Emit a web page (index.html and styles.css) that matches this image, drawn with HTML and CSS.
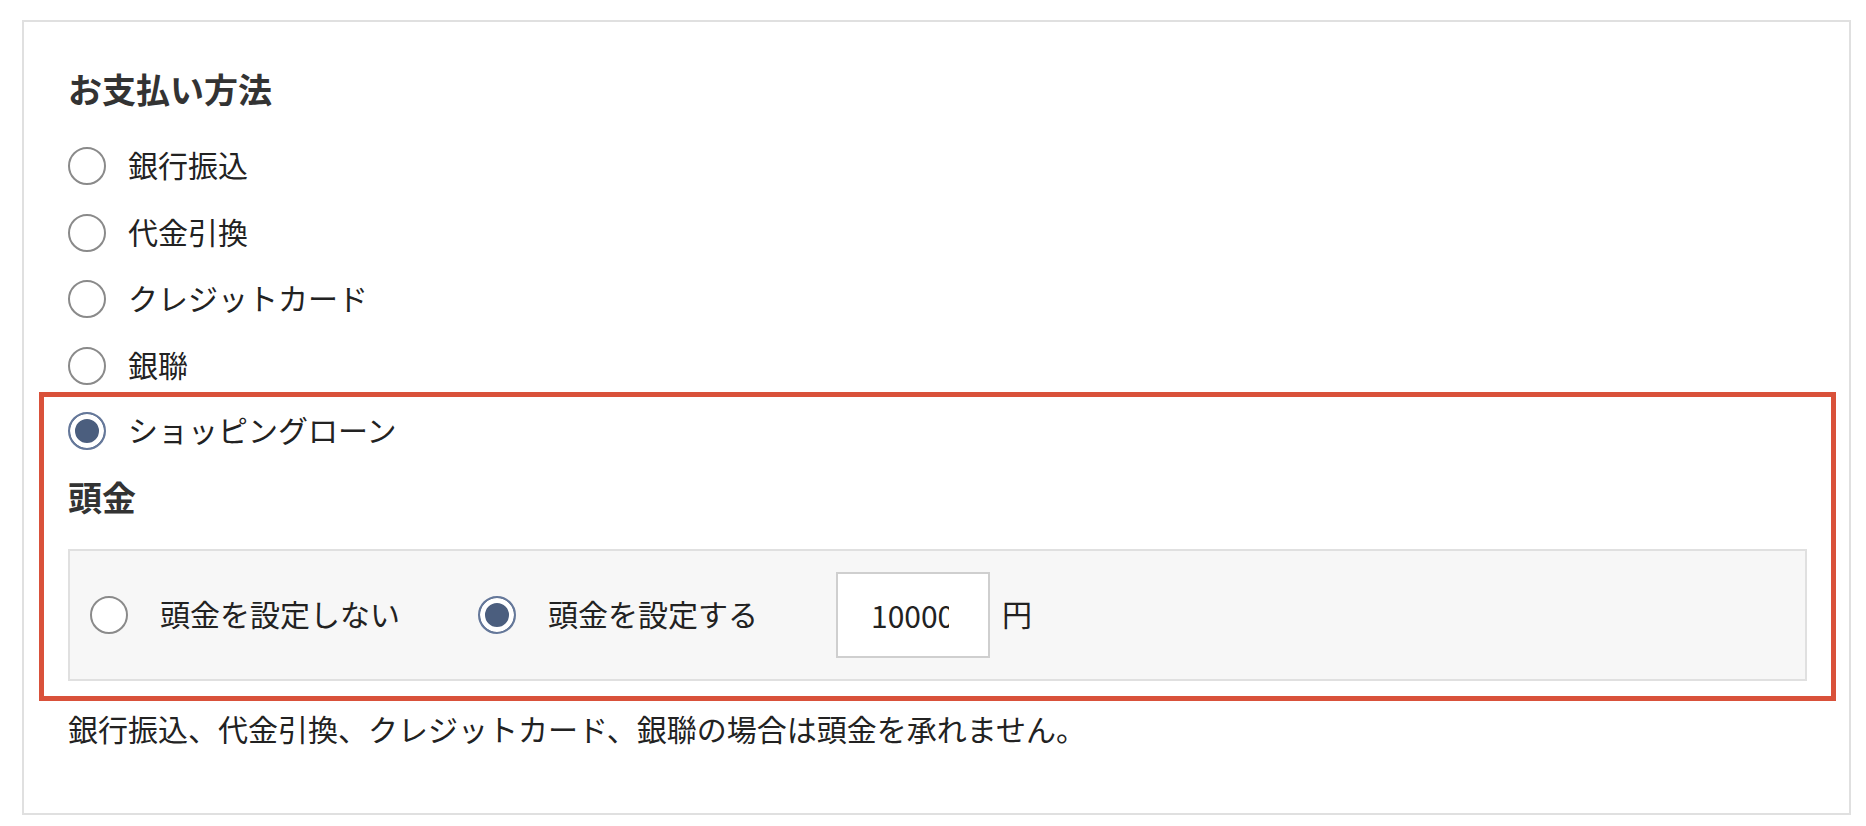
FILE: index.html
```html
<!DOCTYPE html>
<html>
<head>
  <title>お支払い方法</title>
  <link rel="stylesheet" href="styles.css">
</head>
<body>
  <div class="panel">
    <h2 class="section-title">お支払い方法</h2>
    <div class="methods">
      <label class="radio-row"><input type="radio" name="method"><span>銀行振込</span></label>
      <label class="radio-row"><input type="radio" name="method"><span>代金引換</span></label>
      <label class="radio-row"><input type="radio" name="method"><span>クレジットカード</span></label>
      <label class="radio-row"><input type="radio" name="method"><span>銀聯</span></label>
      <div class="highlight">
        <label class="radio-row"><input type="radio" name="method" checked><span>ショッピングローン</span></label>
        <h2 class="section-title sub-title">頭金</h2>
        <div class="down-box">
          <label class="choice"><input type="radio" name="down"><span>頭金を設定しない</span></label>
          <label class="choice"><input type="radio" name="down" checked><span>頭金を設定する</span></label>
          <input class="amount" type="text" value="10000">
          <span class="unit">円</span>
        </div>
      </div>
    </div>
    <p class="note">銀行振込、代金引換、クレジットカード、銀聯の場合は頭金を承れません。</p>
  </div>
</body>
</html>
```

FILE: styles.css
```css
body {
  margin: 0;
  background-color: #fff;
  font-family: "Noto Sans CJK JP", sans-serif;
  color: #222;
}
.panel {
  margin: 20px 15px 0 22px;
  border: 2px solid #e0e0e0;
  padding: 46px 42px 62px 44px;
}
.section-title {
  margin: 0;
  font-size: 34px;
  line-height: 41px;
  font-weight: bold;
  color: #333;
}
.methods {
  display: flex;
  flex-direction: column;
  gap: 28.5px;
  margin-top: 38px;
}
.radio-row {
  display: flex;
  align-items: center;
  height: 38px;
  font-size: 30px;
}
.radio-row span,
.choice span {
  padding-bottom: 4px;
}
input[type="radio"] {
  appearance: none;
  -webkit-appearance: none;
  box-sizing: border-box;
  width: 38px;
  height: 38px;
  margin: 0 22px 0 0;
  border: 2px solid #8a8a8a;
  border-radius: 50%;
  background-color: #fff;
  flex-shrink: 0;
}
input[type="radio"]:checked {
  border-color: #65789a;
  background-color: #4b5e7e;
  box-shadow: inset 0 0 0 5px #fff;
}
.highlight {
  margin: -21px -29px 0;
  border: 5px solid #d9513a;
  padding: 15px 24px;
}
.sub-title {
  margin-top: 26px;
}
.down-box {
  display: flex;
  align-items: center;
  margin-top: 32px;
  border: 2px solid #e0e0e0;
  background-color: #f7f7f7;
  padding: 21px 20px;
}
.choice {
  display: flex;
  align-items: center;
  margin-right: 78px;
  font-size: 30px;
}
.choice input[type="radio"] {
  margin-right: 32px;
}
.amount {
  box-sizing: border-box;
  width: 154px;
  height: 86px;
  border: 2px solid #cfcfcf;
  padding: 0 39px 0 33px;
  background-color: #fff;
  font-family: "Noto Sans CJK JP", sans-serif;
  font-size: 30px;
  color: #222;
  outline: none;
}
.unit {
  margin-left: 12px;
  padding-bottom: 4px;
  font-size: 30px;
}
.note {
  margin: 5px 0 0;
  font-size: 30px;
  line-height: 45px;
}
```
